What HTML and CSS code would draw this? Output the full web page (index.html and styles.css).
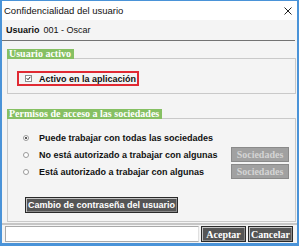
FILE: index.html
```html
<!DOCTYPE html>
<html lang="es">
<head>
<meta charset="utf-8">
<title>Confidencialidad del usuario</title>
<link rel="stylesheet" href="styles.css">
</head>
<body>
<div class="window">
  <div class="titlebar">
    <span class="title">Confidencialidad del usuario</span>
    <svg class="close" width="8" height="8" viewBox="0 0 8 8"><path d="M0.5 0.5L7.5 7.5M7.5 0.5L0.5 7.5" stroke="#222" stroke-width="1" fill="none"/></svg>
  </div>
  <div class="user-row"><b>Usuario</b><span>001 - Oscar</span></div>

  <div class="group g1">
    <div class="group-head"><span class="tab">Usuario activo</span><span class="rule"></span></div>
    <div class="group-body">
      <label class="highlight">
        <span class="check"><svg width="7" height="7" viewBox="0 0 7 7"><path d="M1 3.2L2.8 5.2L6 1.2" stroke="#111" stroke-width="1.3" fill="none"/></svg></span>
        <span>Activo en la aplicación</span>
      </label>
    </div>
  </div>

  <div class="group g2">
    <div class="group-head"><span class="tab">Permisos de acceso a las sociedades</span><span class="rule"></span></div>
    <div class="group-body">
      <div class="radio-row"><span class="radio on"></span><span class="label">Puede trabajar con todas las sociedades</span></div>
      <div class="radio-row"><span class="radio"></span><span class="label">No está autorizado a trabajar con algunas</span><button class="btn-off">Sociedades</button></div>
      <div class="radio-row"><span class="radio"></span><span class="label">Está autorizado a trabajar con algunas</span><button class="btn-off">Sociedades</button></div>
      <button class="btn-dark cambio">Cambio de contraseña del usuario</button>
    </div>
  </div>

  <div class="footer">
    <div class="input"></div>
    <button class="btn-dark action">Aceptar</button>
    <button class="btn-dark action">Cancelar</button>
  </div>
</div>
</body>
</html>
```
FILE: styles.css
```css
html, body {
  margin: 0;
  padding: 0;
  background: #ffffff;
}
body {
  width: 303px;
  height: 246px;
  overflow: hidden;
  font-family: "Liberation Sans", Arial, sans-serif;
}
.window {
  width: 299px;
  height: 246px;
  box-sizing: border-box;
  border: 2px solid #4a93d8;
  border-top-width: 1px;
  border-bottom-width: 3px;
  background: #f4f4f4;
  display: flex;
  flex-direction: column;
}
.titlebar {
  height: 19px;
  flex: none;
  background: #ffffff;
  display: flex;
  align-items: center;
  justify-content: space-between;
  padding: 0 3px 0 2px;
}
.title {
  font-size: 9.5px;
  color: #111;
}
.close {
  display: block;
  margin-right: 2px;
}
.user-row {
  height: 21px;
  flex: none;
  box-sizing: border-box;
  margin-right: 2px;
  padding-left: 4px;
  border-bottom: 1px solid #737373;
  display: flex;
  align-items: center;
  gap: 4px;
  font-size: 9px;
  color: #111;
}
.group {
  margin: 0 1px 0 5px;
  flex: none;
}
.g1 { margin-top: 8px; }
.g2 { margin-top: 15px; }
.group-head {
  display: flex;
  align-items: flex-end;
  height: 10px;
}
.tab {
  height: 10px;
  line-height: 10px;
  background: #86c063;
  color: #ffffff;
  font-family: "Liberation Serif", "Times New Roman", serif;
  font-weight: bold;
  font-size: 10px;
  padding: 0 3px 0 2px;
  white-space: nowrap;
}
.rule {
  flex: 1;
  border-bottom: 1px solid #c9c9c9;
}
.group-body {
  border: 1px solid #c9c9c9;
  border-top: none;
}
.g1 .group-body {
  padding: 12px 0 7px 9px;
}
.highlight {
  width: 122px;
  height: 15px;
  box-sizing: border-box;
  border: 2px solid #e02a33;
  display: flex;
  align-items: center;
  padding-left: 6px;
  gap: 7px;
  font-size: 9px;
  font-weight: bold;
  color: #111;
}
.check {
  width: 7px;
  height: 7px;
  box-sizing: border-box;
  border: 1px solid #8d8d8d;
  background: #fff;
  display: flex;
  align-items: center;
  justify-content: center;
}
.check svg { display: block; }
.g2 .group-body {
  padding: 10px 6px 8px 15px;
}
.radio-row {
  height: 17px;
  display: flex;
  align-items: center;
}
.radio {
  width: 6px;
  height: 6px;
  box-sizing: border-box;
  border: 1px solid #9a9a9a;
  border-radius: 50%;
  background: #fff;
  margin-right: 10px;
  position: relative;
}
.radio.on::after {
  content: "";
  position: absolute;
  left: 1px;
  top: 1px;
  width: 2px;
  height: 2px;
  border-radius: 50%;
  background: #222;
}
.label {
  font-size: 9px;
  font-weight: bold;
  color: #111;
  white-space: nowrap;
}
.btn-off {
  margin-left: auto;
  width: 58px;
  height: 15px;
  box-sizing: border-box;
  border: 1px solid #8a8a8a;
  background: #a1a1a1;
  color: #d4d4d4;
  font-family: "Liberation Serif", "Times New Roman", serif;
  font-weight: bold;
  font-size: 10px;
  padding: 0;
}
.btn-dark {
  box-sizing: border-box;
  border: 1px solid #2a2a2a;
  box-shadow: inset 1px 1px 0 #c4c4c4, inset -1px -1px 0 #8a8a8a;
  background: #555555;
  color: #ffffff;
  font-family: "Liberation Sans", Arial, sans-serif;
  font-weight: bold;
  font-size: 9px;
  padding: 0;
  white-space: nowrap;
}
.cambio {
  display: block;
  margin: 17px 0 0 2px;
  width: 153px;
  height: 16px;
}
.footer {
  margin-top: auto;
  flex: none;
  border-top: 2px solid #c6c6c6;
  padding: 1px 4px 0 3px;
  display: flex;
  gap: 2px;
  height: 17px;
}
.input {
  flex: 1;
  height: 16px;
  box-sizing: border-box;
  background: #fff;
  border: 1px solid #a9a9a9;
  border-right-color: #e0e0e0;
}
.action {
  width: 45px;
  height: 16px;
  font-family: "Liberation Serif", "Times New Roman", serif;
  font-size: 10px;
}
```
